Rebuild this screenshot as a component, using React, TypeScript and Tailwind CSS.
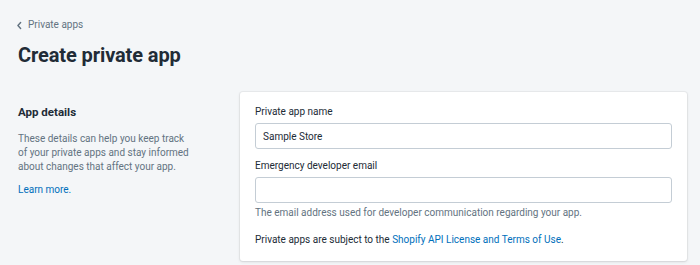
import React from 'react';

const ChevronLeft = () => (
  <svg className="w-[9px] h-[9px]" viewBox="0 0 20 20" fill="none" stroke="currentColor" strokeWidth={3.2} strokeLinecap="round" strokeLinejoin="round">
    <path d="M12.5 3.5 6.5 10l6 6.5" />
  </svg>
);

export default function App() {
  return (
    <div className="w-[700px] h-[265px] overflow-hidden bg-[#f4f6f8] text-[#212b36] font-['Roboto',sans-serif]">
      <div className="pl-[15px] pt-[18px]">
        <a className="flex items-center gap-[4px] text-[10px] leading-[14px] text-[#637381]">
          <ChevronLeft />
          <span>Private apps</span>
        </a>
        <h1 className="mt-[11px] ml-[3px] text-[20px] leading-[24px] font-bold tracking-[-0.1px]">Create private app</h1>
      </div>
      <div className="mt-[25px] flex">
        <div className="w-[222px] pl-[18px] pt-[12px]">
          <h2 className="text-[11.5px] leading-[16px] font-bold">App details</h2>
          <p className="mt-[12px] w-[174px] text-[10px] leading-[14px] text-[#637381]">
            These details can help you keep track of your private apps and stay informed about changes that affect your app.
          </p>
          <a className="block mt-[9px] text-[10px] leading-[14px] text-[#006fbb]">Learn more.</a>
        </div>
        <div className="w-[447px] ml-[18px] bg-white rounded-[3px] shadow-[0_0_0_1px_rgba(63,63,68,0.05),0_1px_3px_0_rgba(63,63,68,0.15)] px-[15px] pt-[13px] pb-[14px]">
          <label className="block text-[10px] leading-[14px]">Private app name</label>
          <div className="mt-[4px] h-[26px] border border-[#c4cdd5] rounded-[3px] px-[7px] flex items-center text-[10px]">
            Sample Store
          </div>
          <label className="block mt-[10px] text-[10px] leading-[14px]">Emergency developer email</label>
          <div className="mt-[4px] h-[26px] border border-[#c4cdd5] rounded-[3px]" />
          <p className="mt-[3px] text-[10px] leading-[14px] text-[#637381]">
            The email address used for developer communication regarding your app.
          </p>
          <p className="mt-[13px] text-[10px] leading-[14px]">
            Private apps are subject to the <a className="text-[#006fbb]">Shopify API License and Terms of Use</a>.
          </p>
        </div>
      </div>
    </div>
  );
}
